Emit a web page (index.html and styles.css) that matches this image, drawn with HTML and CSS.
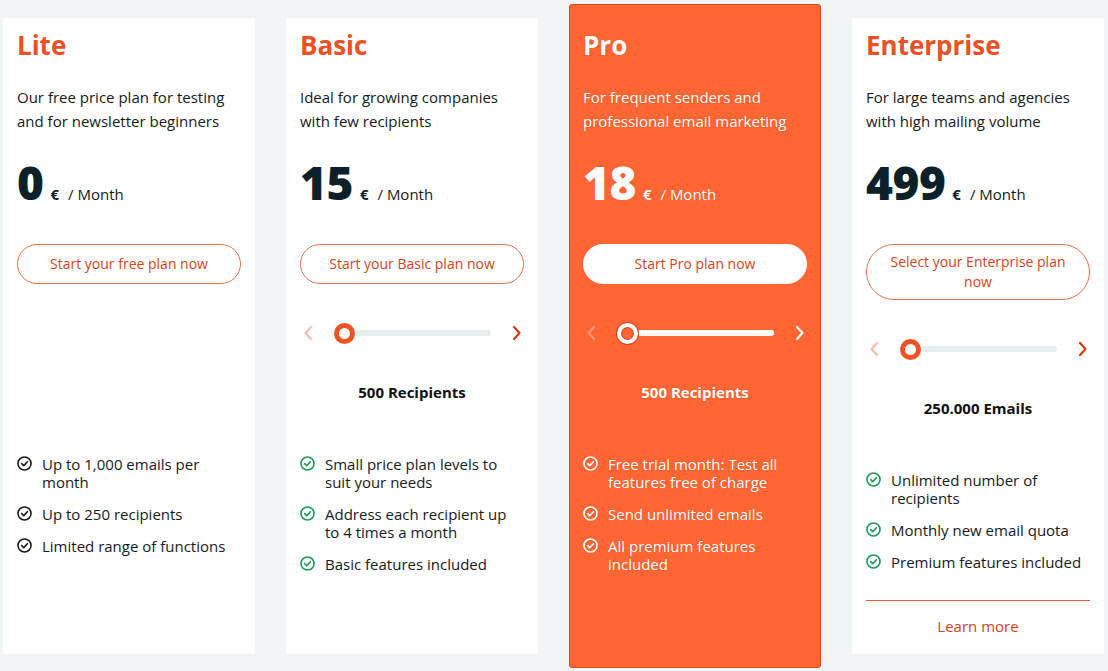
FILE: index.html
```html
<!DOCTYPE html>
<html lang="en">
<head>
<meta charset="utf-8">
<title>Pricing</title>
<link rel="stylesheet" href="styles.css">
</head>
<body>
<svg width="0" height="0" class="defs">
  <defs>
    <symbol id="check" viewBox="0 0 14 14">
      <circle cx="7" cy="7" r="6.1" fill="none" stroke="currentColor" stroke-width="1.5"/>
      <path d="M4.4 7.1 L6.3 9 L9.7 5.3" fill="none" stroke="currentColor" stroke-width="1.5" stroke-linecap="round" stroke-linejoin="round"/>
    </symbol>
    <symbol id="left" viewBox="0 0 10 16">
      <path d="M8 2 L2.5 8 L8 14" fill="none" stroke="currentColor" stroke-width="2" stroke-linecap="round" stroke-linejoin="round"/>
    </symbol>
    <symbol id="right" viewBox="0 0 10 16">
      <path d="M2 2 L7.5 8 L2 14" fill="none" stroke="currentColor" stroke-width="2.2" stroke-linecap="round" stroke-linejoin="round"/>
    </symbol>
  </defs>
</svg>
<main class="plans">
  <section class="card">
    <h2 class="title">Lite</h2>
    <p class="desc">Our free price plan for testing and for newsletter beginners</p>
    <div class="price"><span class="amount">0</span><span class="cur">€</span><span class="per">/ Month</span></div>
    <a class="btn">Start your free plan now</a>
    <div class="slider-block hidden">
      <div class="slider"><svg class="arrow prev"><use href="#left"/></svg><div class="track"><span class="knob"></span></div><svg class="arrow next"><use href="#right"/></svg></div>
      <div class="amount-label">&nbsp;</div>
    </div>
    <ul class="features">
      <li><svg class="ck"><use href="#check"/></svg><span>Up to 1,000 emails per month</span></li>
      <li><svg class="ck"><use href="#check"/></svg><span>Up to 250 recipients</span></li>
      <li><svg class="ck"><use href="#check"/></svg><span>Limited range of functions</span></li>
    </ul>
  </section>

  <section class="card green">
    <h2 class="title">Basic</h2>
    <p class="desc">Ideal for growing companies with few recipients</p>
    <div class="price"><span class="amount">15</span><span class="cur">€</span><span class="per">/ Month</span></div>
    <a class="btn">Start your Basic plan now</a>
    <div class="slider-block">
      <div class="slider"><svg class="arrow prev"><use href="#left"/></svg><div class="track"><span class="knob"></span></div><svg class="arrow next"><use href="#right"/></svg></div>
      <div class="amount-label">500 Recipients</div>
    </div>
    <ul class="features">
      <li><svg class="ck"><use href="#check"/></svg><span>Small price plan levels to suit your needs</span></li>
      <li><svg class="ck"><use href="#check"/></svg><span>Address each recipient up to 4 times a month</span></li>
      <li><svg class="ck"><use href="#check"/></svg><span>Basic features included</span></li>
    </ul>
  </section>

  <section class="card pro">
    <h2 class="title">Pro</h2>
    <p class="desc">For frequent senders and professional email marketing</p>
    <div class="price"><span class="amount">18</span><span class="cur">€</span><span class="per">/ Month</span></div>
    <a class="btn">Start Pro plan now</a>
    <div class="slider-block">
      <div class="slider"><svg class="arrow prev"><use href="#left"/></svg><div class="track"><span class="knob"></span></div><svg class="arrow next"><use href="#right"/></svg></div>
      <div class="amount-label">500 Recipients</div>
    </div>
    <ul class="features">
      <li><svg class="ck"><use href="#check"/></svg><span>Free trial month: Test all features free of charge</span></li>
      <li><svg class="ck"><use href="#check"/></svg><span>Send unlimited emails</span></li>
      <li><svg class="ck"><use href="#check"/></svg><span>All premium features included</span></li>
    </ul>
  </section>

  <section class="card green">
    <h2 class="title">Enterprise</h2>
    <p class="desc">For large teams and agencies with high mailing volume</p>
    <div class="price"><span class="amount">499</span><span class="cur">€</span><span class="per">/ Month</span></div>
    <a class="btn">Select your Enterprise plan now</a>
    <div class="slider-block">
      <div class="slider"><svg class="arrow prev"><use href="#left"/></svg><div class="track"><span class="knob"></span></div><svg class="arrow next"><use href="#right"/></svg></div>
      <div class="amount-label">250.000 Emails</div>
    </div>
    <ul class="features">
      <li><svg class="ck"><use href="#check"/></svg><span>Unlimited number of recipients</span></li>
      <li><svg class="ck"><use href="#check"/></svg><span>Monthly new email quota</span></li>
      <li><svg class="ck"><use href="#check"/></svg><span>Premium features included</span></li>
    </ul>
    <div class="more"><a>Learn more</a></div>
  </section>
</main>
</body>
</html>
```

FILE: styles.css
```css
* { box-sizing: border-box; }

html, body {
  margin: 0;
  padding: 0;
}

body {
  background: #f1f5f6;
  font-family: "Open Sans", "Noto Sans", sans-serif;
  color: #151a1c;
  width: 1108px;
  height: 671px;
  overflow: hidden;
}

.defs { position: absolute; }

.plans {
  display: flex;
  align-items: flex-start;
  gap: 31px;
  padding-left: 3px;
}

.card {
  width: 252px;
  height: 636px;
  margin-top: 18px;
  background: #fff;
  border-radius: 2px;
  padding: 14px 14px 0 14px;
  display: flex;
  flex-direction: column;
}

.title {
  margin: 0;
  font-size: 26px;
  line-height: 26px;
  font-weight: 700;
  color: #ea5124;
}

.desc {
  margin: 27px 0 0 0;
  font-size: 15px;
  line-height: 24px;
  width: 224px;
}

.price {
  margin-top: 24px;
  display: flex;
  align-items: baseline;
  height: 50px;
}

.amount {
  font-size: 46px;
  line-height: 50px;
  font-weight: 800;
  color: #0c2029;
  letter-spacing: -0.5px;
}

.cur {
  font-size: 15px;
  font-weight: 700;
  margin-left: 7px;
  color: #0c2029;
}

.per {
  font-size: 15px;
  margin-left: 9px;
}

.btn {
  margin-top: 37px;
  display: flex;
  align-items: center;
  justify-content: center;
  text-align: center;
  min-height: 40px;
  padding: 7px 20px;
  border: 1px solid #e0734f;
  border-radius: 28px;
  color: #d9431a;
  font-size: 14px;
  line-height: 20px;
}

.slider-block.hidden { visibility: hidden; }

.slider {
  margin-top: 39px;
  display: flex;
  align-items: center;
  height: 20px;
}

.arrow {
  width: 10px;
  height: 16px;
  flex: none;
}

.arrow.prev {
  margin-left: 3px;
  color: #f4b8a4;
}

.arrow.next {
  margin-right: 2px;
  color: #d43a0e;
}

.track {
  position: relative;
  flex: 1;
  height: 6px;
  margin: 0 21px;
  background: #e8eef0;
  border-radius: 3px;
}

.knob {
  position: absolute;
  left: 0;
  top: 50%;
  width: 21px;
  height: 21px;
  margin-top: -10.5px;
  border-radius: 50%;
  background: #fff;
  border: 5px solid #f05424;
}

.amount-label {
  margin-top: 39px;
  text-align: center;
  font-weight: 700;
  font-size: 15px;
  line-height: 20px;
  color: #111;
}

.features {
  list-style: none;
  margin: 53px 0 0 0;
  padding: 0;
}

.features li {
  display: flex;
  align-items: flex-start;
  font-size: 15px;
  line-height: 18px;
  margin-bottom: 14px;
}

.ck {
  width: 15px;
  height: 15px;
  flex: none;
  margin-top: 1px;
  margin-left: 0;
  margin-right: 10px;
  color: #1b1b1b;
}

.green .ck { color: #1d9a58; }

.more {
  margin-top: 15px;
  border-top: 1px solid #e0603a;
  padding-top: 14px;
  text-align: center;
}

.more a {
  color: #d9431a;
  font-size: 15px;
  line-height: 20px;
}

/* Pro highlighted card */
.card.pro {
  margin-top: 4px;
  height: 664px;
  padding: 27px 13px 0 13px;
  background: #ff6633;
  border: 1px solid #e0481c;
  border-radius: 3px;
  color: #fff;
  text-shadow: 0 0 1px rgba(120, 40, 10, 0.35);
}

.pro .title,
.pro .amount,
.pro .cur { color: #fff; }

.pro .btn {
  background: #fff;
  border-color: #fff;
  color: #d9431a;
  text-shadow: none;
}

.pro .arrow.prev { color: #ff9a78; }
.pro .arrow.next { color: #fff; }

.pro .track { background: #fff; }

.pro .knob {
  background: #ff6633;
  border: 4px solid #fff;
  box-shadow: 0 0 0 1px #d9431a, inset 0 0 0 1px #d9431a;
}

.pro .amount-label { color: #fff; }

.pro .ck { color: #fff; }
```
